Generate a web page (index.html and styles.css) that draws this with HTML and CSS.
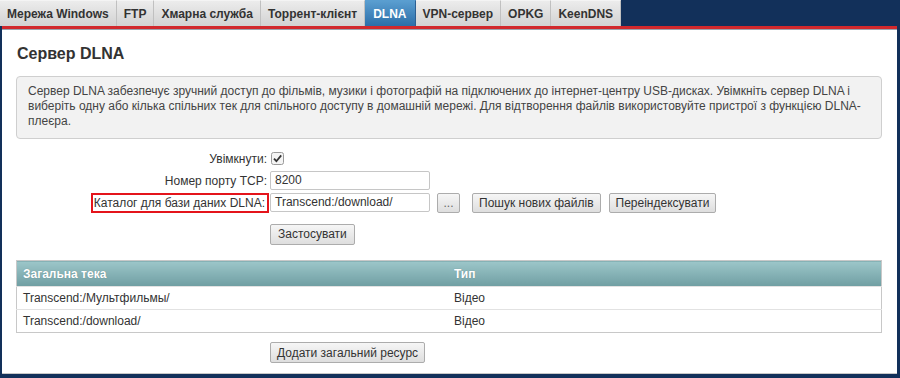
FILE: index.html
```html
<!DOCTYPE html>
<html lang="uk">
<head>
<meta charset="utf-8">
<title>Сервер DLNA</title>
<link rel="stylesheet" href="styles.css">
</head>
<body>
<nav class="tabs">
  <a class="tab">Мережа Windows</a>
  <a class="tab">FTP</a>
  <a class="tab">Хмарна служба</a>
  <a class="tab">Торрент-клієнт</a>
  <a class="tab active">DLNA</a>
  <a class="tab">VPN-сервер</a>
  <a class="tab">OPKG</a>
  <a class="tab">KeenDNS</a>
</nav>
<main class="panel">
  <h1 class="title">Сервер DLNA</h1>
  <div class="info">Сервер DLNA забезпечує зручний доступ до фільмів, музики і фотографій на підключених до інтернет-центру USB-дисках. Увімкніть сервер DLNA і виберіть одну або кілька спільних тек для спільного доступу в домашній мережі. Для відтворення файлів використовуйте пристрої з функцією DLNA-плеєра.</div>
  <div class="form">
    <div class="row">
      <span class="label">Увімкнути:</span>
      <span class="check"><svg width="13" height="13" viewBox="0 0 13 13"><rect x="0.5" y="0.5" width="12" height="12" rx="2" fill="#f4f4f4" stroke="#9a9a9a"/><path d="M3 6.6 L5.4 9.2 L10.2 3.4" fill="none" stroke="#333" stroke-width="1.8"/></svg></span>
    </div>
    <div class="row">
      <span class="label">Номер порту TCP:</span>
      <span class="input">8200</span>
    </div>
    <div class="row">
      <span class="label"><span class="hl">Каталог для бази даних DLNA:</span></span>
      <span class="input">Transcend:/download/</span>
      <button class="btn dots">...</button>
      <button class="btn b-search">Пошук нових файлів</button>
      <button class="btn b-reindex">Переіндексувати</button>
    </div>
    <div class="row apply">
      <span class="label"></span>
      <button class="btn">Застосувати</button>
    </div>
  </div>
  <table class="grid">
    <thead>
      <tr><th class="c1">Загальна тека</th><th>Тип</th></tr>
    </thead>
    <tbody>
      <tr><td class="c1">Transcend:/Мультфильмы/</td><td>Відео</td></tr>
      <tr><td class="c1">Transcend:/download/</td><td>Відео</td></tr>
    </tbody>
  </table>
  <div class="row add">
    <span class="label"></span>
    <button class="btn">Додати загальний ресурс</button>
  </div>
</main>
</body>
</html>
```
FILE: styles.css
```css
html, body {
  margin: 0;
  padding: 0;
}
body {
  background: #12305a;
  font-family: "Liberation Sans", Arial, sans-serif;
  font-size: 12px;
  color: #333;
  height: 378px;
  overflow: hidden;
}
.tabs {
  display: flex;
  height: 26px;
}
.tab {
  display: flex;
  align-items: center;
  padding: 0 7px;
  font-weight: bold;
  font-size: 12px;
  color: #333;
  background: linear-gradient(#ececec, #d2d2d2);
  border-right: 1px solid #c0c0c0;
  border-top: 1px solid #f4f4f4;
  box-sizing: border-box;
}
.tab.active {
  background: linear-gradient(#5a9ed0, #2c6ea8);
  color: #fff;
  border-right-color: #2c5f92;
  border-top-color: #5a9ed0;
  padding: 0 8px;
}
.panel {
  margin: 0 3px 0 2px;
  background: #fff;
  border-top: 3px solid #d1282c;
  box-shadow: inset 0 1px 0 #9aa3ae;
  padding: 12px 15px 0 14px;
  height: 348px;
  box-sizing: border-box;
  border-bottom: 1px solid #c8c8c8;
}
.title {
  margin: 3px 0 0 1px;
  font-size: 16px;
  font-weight: bold;
  color: #333;
  line-height: 20px;
}
.info {
  margin-top: 12px;
  background: #f2f2f2;
  border: 1px solid #cfcfcf;
  border-radius: 4px;
  padding: 7px 11px 9px 11px;
  line-height: 15px;
  color: #444;
}
.form {
  margin-top: 9px;
}
.row {
  display: flex;
  align-items: center;
  height: 21px;
  margin-bottom: 1px;
}
.label {
  width: 251px;
  text-align: right;
  flex: none;
  color: #333;
}
.hl {
  border: 2px solid #e4141b;
  padding: 1px 2px 1px 1px;
  margin-right: -2px;
}
.check {
  display: flex;
  margin-left: 4px;
}
.input {
  margin-left: 3px;
  width: 160px;
  height: 19px;
  box-sizing: border-box;
  border: 1px solid #c6c6c6;
  border-radius: 2px;
  padding: 0 4px;
  line-height: 17px;
  color: #333;
  background: #fff;
}
.btn {
  font-family: "Liberation Sans", Arial, sans-serif;
  font-size: 12px;
  color: #333;
  height: 20px;
  padding: 0 7px;
  border: 1px solid #acacac;
  border-radius: 2px;
  background: linear-gradient(#f6f6f6, #dedede);
  margin: 0;
  line-height: 18px;
}
.dots {
  margin-left: 7px;
  width: 23px;
  padding: 0;
  color: #666;
}
.b-search {
  margin-left: 12px;
  margin-right: 8px;
  padding: 0 6px;
}
.b-reindex {
  padding: 0 6px;
}
.apply {
  margin-top: 10px;
  height: 22px;
}
.apply .btn, .add .btn {
  margin-left: 3px;
  height: 21px;
}
.add .btn {
  padding: 0 6px;
}
.grid {
  margin-top: 15px;
  width: 866px;
  border-collapse: collapse;
  border: 1px solid #c8c8c8;
}
.grid th {
  text-align: left;
  color: #fff;
  font-weight: bold;
  height: 25px;
  padding: 0 6px;
  background: linear-gradient(#9cc6c9, #6f9ea2);
  text-shadow: 0 0 1px rgba(0,0,0,0.25);
}
.grid td {
  height: 22px;
  padding: 0 6px;
  border-top: 1px solid #e2e2e2;
  color: #333;
}
.grid .c1 {
  width: 419px;
}
.add {
  margin-top: 9px;
}
```
